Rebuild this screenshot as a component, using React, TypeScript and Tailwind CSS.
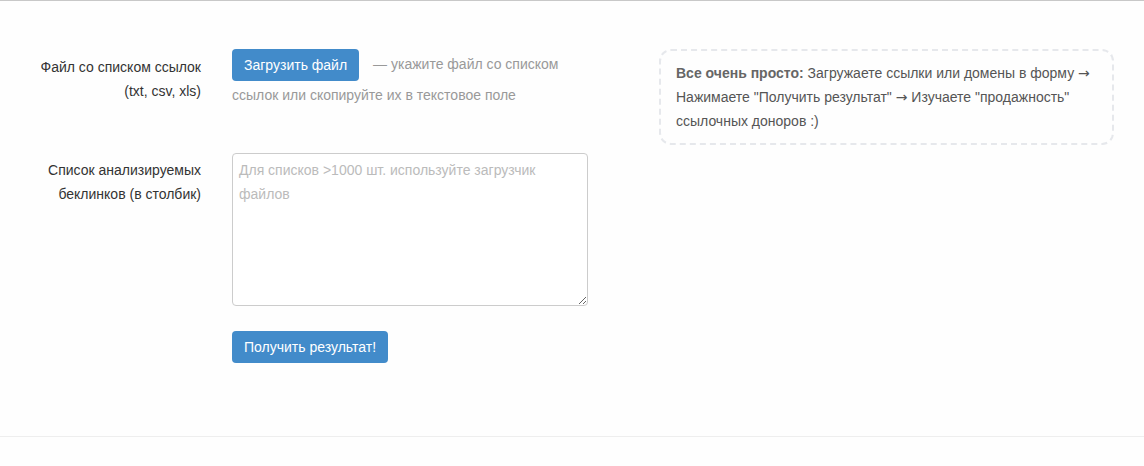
function Arrow() {
  return <span style={{ fontFamily: '"Noto Sans", "DejaVu Sans", sans-serif' }}>→</span>;
}

export default function App() {
  return (
    <div
      className="min-h-[466px] bg-[#fefefe] border-t border-[#c8c8c8] text-[14px] text-[#333]"
      style={{ fontFamily: '"Liberation Sans", Arial, sans-serif' }}
    >
      <div className="flex items-start pt-[48px] pb-[73px]">
        <form className="grid grid-cols-[201px_356px] gap-x-[31px] gap-y-[44px]" onSubmit={(e) => e.preventDefault()}>
          <label className="text-right leading-[24px] pt-[6px]">
            Файл со списком ссылок
            <br />
            (txt, csv, xls)
          </label>
          <div className="leading-[28px] text-[#999]">
            <button
              type="button"
              className="inline-block align-middle h-[32px] px-[12px] rounded-[4px] bg-[#428bca] text-white leading-[20px] mr-[14px]"
            >
              Загрузить файл
            </button>
            — укажите файл со списком ссылок или скопируйте их в текстовое поле
          </div>

          <label className="text-right leading-[24px] pt-[5px]">
            Список анализируемых
            <br />
            беклинков (в столбик)
          </label>
          <div className="flex flex-col gap-[25px]">
            <textarea
              className="block w-[356px] h-[153px] rounded-[4px] border border-[#ccc] bg-white px-[6px] py-[4px] leading-[24px] text-[#555] placeholder:text-[#bbb] outline-none"
              placeholder="Для списков >1000 шт. используйте загрузчик файлов"
            />
            <div>
              <button
                type="submit"
                className="h-[32px] px-[12px] rounded-[4px] bg-[#428bca] text-white leading-[20px]"
              >
                Получить результат!
              </button>
            </div>
          </div>
        </form>

        <div className="ml-[71px] w-[455px] rounded-[12px] border-2 border-dashed border-[#e6e8ec] px-[15px] py-[10px] leading-[24px] text-[#555]">
          <b className="text-[#666]">Все очень просто:</b> Загружаете ссылки или домены в форму <Arrow /> Нажимаете
          "Получить результат" <Arrow /> Изучаете "продажность" ссылочных доноров :)
        </div>
      </div>
      <div className="border-t border-[#eeeeee]" />
    </div>
  );
}
